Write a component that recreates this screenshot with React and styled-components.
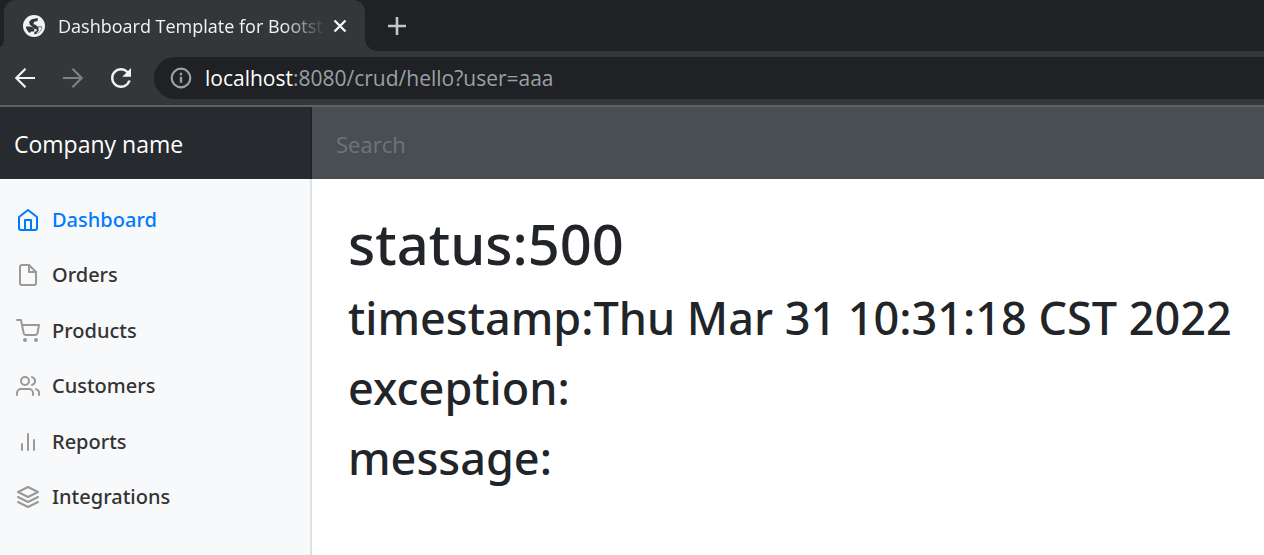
import React from 'react';
import styled, { createGlobalStyle, css } from 'styled-components';
import { FiFile, FiShoppingCart, FiUsers, FiBarChart2, FiLayers, FiHome } from 'react-icons/fi';
import { MdRefresh } from 'react-icons/md';

const GlobalStyle = createGlobalStyle`
  *, *::before, *::after { box-sizing: border-box; }
  html, body, #root { height: 100%; }
  body {
    margin: 0;
    background: #fff;
    color: #212529;
    font-family: "Segoe UI", "Open Sans", "Noto Sans", sans-serif;
  }
  h1, h2, ul { margin: 0; padding: 0; }
`;

const mediumFamily = '"Segoe UI", "Noto Sans", sans-serif';

const Page = styled.div`
  display: flex;
  flex-direction: column;
  min-height: 100%;
`;

const TabStrip = styled.div`
  display: flex;
  height: 51px;
  padding-left: 4px;
  background: #202124;
  overflow: hidden;
`;

const Tab = styled.div`
  position: relative;
  display: flex;
  align-items: center;
  width: 361px;
  padding: 0 14px 0 19px;
  background: #35363a;
  border-radius: 12px 12px 0 0;
  color: #f1f3f4;

  &::before, &::after {
    content: "";
    position: absolute;
    bottom: 0;
    width: 12px;
    height: 12px;
  }
  &::before {
    right: 100%;
    background: radial-gradient(circle at 0 0, transparent 12px, #35363a 12px);
  }
  &::after {
    left: 100%;
    background: radial-gradient(circle at 100% 0, transparent 12px, #35363a 12px);
  }
`;

const TabTitle = styled.span`
  flex: 1;
  min-width: 0;
  margin: 0 4px 0 13px;
  overflow: hidden;
  white-space: nowrap;
  font-size: 18px;
  line-height: 28px;
  mask-image: linear-gradient(to right, #000 84%, transparent);
`;

const IconButton = styled.button`
  display: flex;
  align-items: center;
  justify-content: center;
  width: ${p => p.$size || 32}px;
  height: ${p => p.$size || 32}px;
  padding: 0;
  border: 0;
  background: none;
  color: ${p => p.$color || '#f1f3f4'};
`;

const NewTab = styled.div`
  display: flex;
  align-items: center;
  padding-left: 16px;
`;

const Toolbar = styled.div`
  display: flex;
  align-items: center;
  height: 56px;
  padding-left: 9px;
  background: #35363a;
  border-bottom: 2px solid #5f6063;
`;

const NavButtons = styled.div`
  display: flex;
  gap: 16px;
  margin-right: 17px;
`;

const AddressBar = styled.div`
  flex: 1;
  display: flex;
  align-items: center;
  gap: 13px;
  height: 42px;
  padding-left: 16px;
  border-radius: 21px 0 0 21px;
  background: #202124;
  color: #9aa0a6;
  font-size: 21px;
  line-height: 40px;
`;

const Host = styled.span`
  color: #fff;
`;

const Navbar = styled.header`
  display: flex;
  height: 72px;
  background: #343a40;
`;

const Brand = styled.a`
  flex: none;
  display: flex;
  align-items: center;
  width: 312px;
  padding: 2px 14px 0;
  background: #272b30;
  box-shadow: inset -2px 0 0 #1f2226;
  color: #fff;
  font-size: 23px;
  text-decoration: none;
`;

const Search = styled.input`
  flex: 1;
  min-width: 0;
  padding: 2px 24px 0;
  border: 0;
  background: #494e52;
  color: #fff;
  font: inherit;
  font-size: 22px;
  &::placeholder { color: #6c757d; opacity: 1; }
`;

const Body = styled.div`
  flex: 1;
  display: flex;
`;

const Sidebar = styled.nav`
  flex: none;
  width: 312px;
  padding: 13px 16px;
  background: #f8f9fa;
  box-shadow: inset -2px 0 0 #e0e1e2;
`;

const NavList = styled.ul`
  display: grid;
  grid-auto-rows: 1fr;
  min-height: 333px;
  list-style: none;
`;

const NavItem = styled.li`
  display: flex;
`;

const NavLink = styled.a`
  flex: 1;
  display: flex;
  align-items: center;
  gap: 12px;
  color: ${p => (p.$active ? '#007bff' : '#333')};
  text-decoration: none;
  font-family: ${mediumFamily};
  font-weight: 500;
  font-size: 20px;
  line-height: 30px;
  svg {
    flex: none;
    color: ${p => (p.$active ? 'inherit' : '#999')};
  }
`;

const Main = styled.main`
  flex: 1;
  min-width: 0;
  padding: 28px 24px 28px 36px;
`;

const heading = css`
  font-family: ${mediumFamily};
  font-weight: 500;
`;

const Status = styled.h1`
  ${heading}
  margin-bottom: 10px;
  font-size: 56px;
  line-height: 72px;
`;

const Detail = styled.h2`
  ${heading}
  margin-bottom: 12px;
  font-size: 45px;
  line-height: 58px;
`;

const Globe = () => (
  <svg width="22" height="22" viewBox="0 0 22 22" aria-hidden="true">
    <circle cx="11" cy="11" r="11" fill="#f1f3f4" />
    <path
      d="M14.6 3L15 5.2C14 6.6 12 6.4 11 7L10.4 9.2C12.6 9.4 13.4 10.4 14.4 11.6H19.2C19 16 15.4 19.2 11.4 19.4L11.2 17.4L14 15.6L13.4 14.2L10.6 13.4C9.6 12 8 11.8 6.8 11.6H2.8C3.2 14.6 4.600 16.600 6.800 18L8.200 16.400H11.400L11.200 13.600L8.600 11.200L6.600 9.400L6.200 6.400L8.800 4.200Z"
      fill="#35363a"
    />
    <path d="M15.200 12.200H18.800C18.200 15.600 15.600 18 13.200 18.800L15.800 15.600Z" fill="#f1f3f4" />
  </svg>
);

const StrokeIcon = ({ size, width, d, children }) => (
  <svg width={size} height={size} viewBox={`0 0 ${size} ${size}`} fill="none" stroke="currentColor" strokeWidth={width} aria-hidden="true">
    {d && <path d={d} />}
    {children}
  </svg>
);

const ArrowLeft = () => <StrokeIcon size={22} width={2.2} d="M21 11H3M11.5 1.8L2.3 11l9.2 9.2" />;
const ArrowRight = () => <StrokeIcon size={22} width={2.2} d="M1 11h18M10.5 1.8l9.2 9.2l-9.2 9.2" />;
const Close = () => <StrokeIcon size={14} width={2.4} d="M1.5 1.5l11 11M12.5 1.5l-11 11" />;
const Plus = () => <StrokeIcon size={18} width={2.6} d="M9 0v18M0 9h18" />;
const Info = () => (
  <StrokeIcon size={22} width={2.2}>
    <circle cx="11" cy="11" r="9.3" />
    <path d="M11 9.8v6M11 5.8v2.4" strokeWidth="2.4" />
  </StrokeIcon>
);

const links = [
  ['Dashboard', FiHome],
  ['Orders', FiFile],
  ['Products', FiShoppingCart],
  ['Customers', FiUsers],
  ['Reports', FiBarChart2],
  ['Integrations', FiLayers],
];

export default function App() {
  return (
    <Page>
      <GlobalStyle />
      <TabStrip>
        <Tab>
          <Globe />
          <TabTitle>Dashboard Template for Bootst</TabTitle>
          <IconButton $size={22} aria-label="Close tab"><Close /></IconButton>
        </Tab>
        <NewTab>
          <IconButton aria-label="New tab" $color="#c4c7ca"><Plus /></IconButton>
        </NewTab>
      </TabStrip>
      <Toolbar>
        <NavButtons>
          <IconButton aria-label="Back"><ArrowLeft /></IconButton>
          <IconButton aria-label="Forward" $color="#7f8083"><ArrowRight /></IconButton>
          <IconButton aria-label="Reload"><MdRefresh size={30} /></IconButton>
        </NavButtons>
        <AddressBar>
          <Info />
          <span role="textbox" tabIndex={0} aria-label="Address"><Host>localhost</Host>:8080/crud/hello?user=aaa</span>
        </AddressBar>
      </Toolbar>
      <Navbar>
        <Brand href="#">Company name</Brand>
        <Search type="text" placeholder="Search" aria-label="Search" />
      </Navbar>
      <Body>
        <Sidebar>
          <NavList>
            {links.map(([label, Icon], i) => (
              <NavItem key={label}>
                <NavLink href="#" $active={i === 0}>
                  <Icon size={24} />
                  {label}
                </NavLink>
              </NavItem>
            ))}
          </NavList>
        </Sidebar>
        <Main>
          <Status>status:500</Status>
          <Detail>timestamp:Thu Mar 31 10:31:18 CST 2022</Detail>
          <Detail>exception:</Detail>
          <Detail>message:</Detail>
        </Main>
      </Body>
    </Page>
  );
}
